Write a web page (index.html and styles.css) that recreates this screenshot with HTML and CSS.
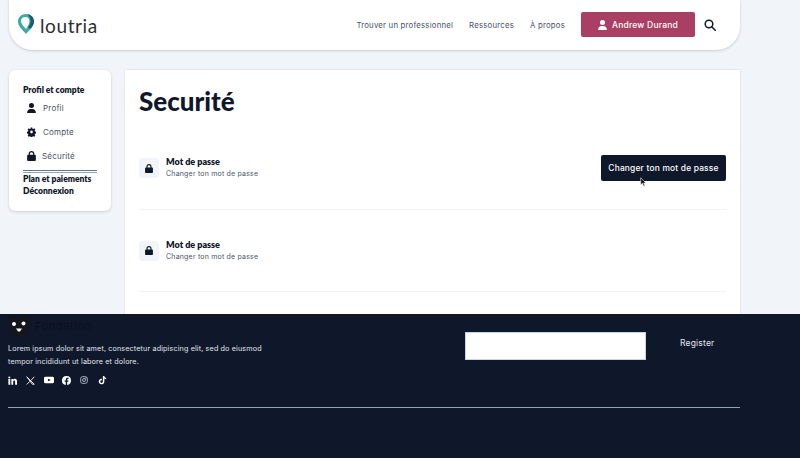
FILE: index.html
```html
<!DOCTYPE html>
<html lang="fr">
<head>
<meta charset="utf-8">
<title>Loutria</title>
<link rel="stylesheet" href="styles.css">
</head>
<body>
<header class="header">
  <a class="logo">
    <svg class="pin" viewBox="0 0 16 20" width="16" height="20"><path d="M8 20C4 15.500 0 12 0 7.500 0 3.200 3.400 0 8 0c4.600 0 8 3.200 8 7.500C16 12 12 15.500 8 20z" fill="#3fa9a8"/><path d="M8 15C5.500 12 3 9.800 3 7 3 4.500 5 3 7.500 3 10 3 11.500 5 11.500 7 11.500 9.800 10 12.300 8 15z" fill="#fff"/><path d="M9.500.2C13 .7 16 3.400 16 7.500c0 2.500-1.500 5-3.500 7.300L10 13.400C11.800 11 12.500 9 12.500 7c0-3-1.300-5-3-6.800z" fill="#1f5a6e"/></svg>
    <span class="logo-text">loutria</span>
  </a>
  <nav class="nav">
    <a class="nav-link">Trouver un professionnel</a>
    <a class="nav-link">Ressources</a>
    <a class="nav-link">À propos</a>
    <a class="user-btn">
      <svg viewBox="0 0 448 512" width="9" height="10" fill="#fff"><path d="M224 256a128 128 0 1 0 0-256 128 128 0 1 0 0 256zm-45.700 48C79.800 304 0 383.800 0 482.300 0 498.700 13.300 512 29.700 512h388.600c16.400 0 29.700-13.300 29.700-29.700C448 383.800 368.200 304 269.700 304h-91.400z"/></svg>
      Andrew Durand
    </a>
    <svg class="search" viewBox="0 0 24 24" width="12" height="12" fill="none" stroke="#0f172a" stroke-width="3" stroke-linecap="round"><circle cx="10" cy="10" r="7.600"/><path d="M16 16l6.500 6.500"/></svg>
  </nav>
</header>

<div class="content">
  <aside class="side">
    <h3 class="side-title">Profil et compte</h3>
    <a class="side-item">
      <svg viewBox="0 0 448 512" width="9" height="10" fill="#0f172a"><path d="M224 256a128 128 0 1 0 0-256 128 128 0 1 0 0 256zm-45.700 48C79.800 304 0 383.800 0 482.300 0 498.700 13.300 512 29.700 512h388.600c16.400 0 29.700-13.300 29.700-29.700C448 383.800 368.200 304 269.700 304h-91.400z"/></svg>
      <span>Profil</span>
    </a>
    <a class="side-item">
      <svg viewBox="0 0 24 24" width="9" height="10" fill="#0f172a" preserveAspectRatio="none"><path fill-rule="evenodd" d="M10 1h4l.6 3 2.200.9 2.600-1.700 2.800 2.800-1.700 2.600.9 2.200 3 .6v4l-3 .6-.9 2.200 1.700 2.600-2.800 2.800-2.600-1.700-2.200.9-.6 3h-4l-.6-3-2.200-.9-2.600 1.700-2.800-2.800 1.700-2.600-.9-2.200-3-.6v-4l3-.6.9-2.200-1.700-2.600 2.800-2.800 2.600 1.700 2.200-.9zM12 8.500a3.500 3.500 0 1 0 0 7 3.500 3.500 0 0 0 0-7z"/></svg>
      <span>Compte</span>
    </a>
    <a class="side-item side-item-sec">
      <svg viewBox="0 0 448 512" width="9" height="10" fill="#0f172a"><path d="M144 144v48h160v-48a80 80 0 0 0-160 0zm-64 48v-48a144 144 0 0 1 288 0v48h16c35.300 0 64 28.700 64 64v192c0 35.300-28.700 64-64 64H64c-35.300 0-64-28.700-64-64V256c0-35.300 28.700-64 64-64h16z"/></svg>
      <span>Sécurité</span>
    </a>
    <div class="side-rule"></div>
    <a class="side-strong">Plan et paiements</a>
    <a class="side-strong">Déconnexion</a>
  </aside>

  <main class="main">
    <h1 class="title">Securité</h1>
    <section class="row row-first">
      <div class="row-left">
        <span class="lock">
          <svg viewBox="0 0 448 512" width="8" height="9" fill="#0f172a"><path d="M144 144v48h160v-48a80 80 0 0 0-160 0zm-64 48v-48a144 144 0 0 1 288 0v48h16c35.300 0 64 28.700 64 64v192c0 35.300-28.700 64-64 64H64c-35.300 0-64-28.700-64-64V256c0-35.300 28.700-64 64-64h16z"/></svg>
        </span>
        <div>
          <div class="row-title">Mot de passe</div>
          <div class="row-sub">Changer ton mot de passe</div>
        </div>
      </div>
      <a class="dark-btn">Changer ton mot de passe</a>
    </section>
    <section class="row">
      <div class="row-left">
        <span class="lock">
          <svg viewBox="0 0 448 512" width="8" height="9" fill="#0f172a"><path d="M144 144v48h160v-48a80 80 0 0 0-160 0zm-64 48v-48a144 144 0 0 1 288 0v48h16c35.300 0 64 28.700 64 64v192c0 35.300-28.700 64-64 64H64c-35.300 0-64-28.700-64-64V256c0-35.300 28.700-64 64-64h16z"/></svg>
        </span>
        <div>
          <div class="row-title">Mot de passe</div>
          <div class="row-sub">Changer ton mot de passe</div>
        </div>
      </div>
    </section>
  </main>
</div>

<footer class="footer">
  <div class="foot-top">
    <div class="foot-left">
      <div class="foot-logo">
        <span class="foot-mark">
          <svg viewBox="0 0 20 20" width="20" height="20"><rect width="20" height="20" rx="2" fill="#14161c"/><circle cx="5" cy="8" r="2" fill="#fff"/><circle cx="14.500" cy="7.500" r="2" fill="#fff"/><path d="M7 12.500h6l-2 3h-2z" fill="#fff"/></svg>
        </span>
        <span class="foot-name">Fondation</span>
      </div>
      <p class="foot-text">Lorem ipsum dolor sit amet, consectetur adipiscing elit, sed do eiusmod tempor incididunt ut labore et dolore.</p>
      <div class="socials">
        <svg viewBox="0 0 24 24" width="9" height="9" fill="#fff"><path d="M1 8h5v15H1zM3.500 1a2.700 2.700 0 1 1 0 5.400 2.700 2.700 0 0 1 0-5.400zM9 8h4.700v2.100c.9-1.500 2.500-2.500 4.700-2.500 4 0 5.600 2.500 5.600 6.900V23h-5v-7.600c0-2-.5-3.400-2.300-3.400-2 0-2.900 1.500-2.900 3.500V23H9z"/></svg>
        <svg viewBox="0 0 24 24" width="9" height="9" fill="none" stroke="#fff" stroke-width="2.400"><path d="M2 2l20 20h-5L2 2z"/><path d="M22 2L13 12M10.500 14L2 22.500"/></svg>
        <svg viewBox="0 0 24 24" width="10" height="8" fill="#fff" preserveAspectRatio="none"><path fill-rule="evenodd" d="M4 2h16a4 4 0 0 1 4 4v12a4 4 0 0 1-4 4H4a4 4 0 0 1-4-4V6a4 4 0 0 1 4-4zm5.500 6v8l7-4z"/></svg>
        <svg viewBox="0 0 24 24" width="9" height="9" fill="#fff"><path d="M24 12a12 12 0 1 0-13.900 11.900v-8.400H7V12h3.100V9.400c0-3 1.800-4.700 4.500-4.700 1.300 0 2.700.2 2.700.2v3h-1.500c-1.500 0-2 .9-2 1.900V12h3.400l-.5 3.500h-2.900v8.400A12 12 0 0 0 24 12z"/></svg>
        <svg viewBox="0 0 24 24" width="8" height="8" fill="none" stroke="#cbd5e1" stroke-width="2.400"><rect x="2" y="2" width="20" height="20" rx="6"/><circle cx="12" cy="12" r="4.500"/><circle cx="17.800" cy="6.200" r=".8" fill="#cbd5e1"/></svg>
        <svg viewBox="0 0 24 24" width="9" height="10" fill="#fff"><path d="M13 1h3.800c.3 2.900 2 4.700 4.900 4.900v3.900c-1.800 0-3.400-.6-4.800-1.600v7.700c0 5-3.900 7.700-7.500 7.700-4.300 0-7.400-3.300-7.400-7.400 0-4.500 3.800-7.900 8.700-7.300v4c-2.400-.6-4.700.8-4.700 3.300 0 2 1.500 3.500 3.400 3.500 2.100 0 3.600-1.500 3.600-3.900z"/></svg>
      </div>
    </div>
    <form class="foot-form">
      <div class="foot-input"></div>
      <span class="foot-reg">Register</span>
    </form>
  </div>
  <div class="foot-rule"></div>
</footer>

<svg class="cursor" viewBox="0 0 10 14" width="7" height="10"><path d="M1 1v10l2.500-2.200L5.200 13l1.800-.8L5.300 8.300H8.500z" fill="#111" stroke="#fff" stroke-width=".8"/></svg>
</body>
</html>
```
FILE: styles.css
```css
* { box-sizing: border-box; }
html, body { margin: 0; padding: 0; }
body {
  position: relative;
  width: 800px;
  height: 458px;
  overflow: hidden;
  background: #f1f5f9;
  font-family: "Inter", "Liberation Sans", sans-serif;
  color: #0f172a;
}
h1, h3, p { margin: 0; }

.header {
  margin-left: 9px;
  width: 731px;
  height: 50px;
  background: #fff;
  border-radius: 0 0 24px 24px;
  box-shadow: 0 1px 3px rgba(15, 23, 42, .18);
  display: flex;
  align-items: center;
  justify-content: space-between;
  padding: 0 24px 1px 9px;
}
.logo { display: flex; align-items: center; gap: 6px; }
.pin { display: block; margin-top: -2px; }
.logo-text {
  font-family: "Lato", sans-serif;
  font-size: 19px;
  letter-spacing: .6px;
  color: #2b2f36;
  font-weight: 400;
  margin-top: 1px;
}
.nav { display: flex; align-items: center; }
.nav-link {
  font-size: 7.800px;
  letter-spacing: .2px;
  color: #475569;
  margin-right: 16px;
  white-space: nowrap;
}
.user-btn {
  width: 114px;
  height: 25px;
  background: #a94064;
  border-radius: 2px;
  color: #fff;
  font-size: 8.500px;
  font-weight: 500;
  letter-spacing: .2px;
  display: flex;
  align-items: center;
  justify-content: center;
  gap: 5px;
  margin-right: 9px;
  white-space: nowrap;
}
.search { display: block; }

.content { display: flex; align-items: flex-start; gap: 14px; margin: 20px 0 0 9px; height: 244px; }
.side {
  width: 102px;
  height: 141px;
  background: #fff;
  border-radius: 6px;
  box-shadow: 0 1px 3px rgba(15, 23, 42, .18);
  padding: 14px 14px 0;
}
.side-title, .side-strong, .row-title {
  font-family: "Lato", sans-serif;
  font-weight: 800;
  white-space: nowrap;
}
.side-title { font-size: 8.500px; line-height: 12px; color: #0f172a; }
.side-item {
  display: flex;
  align-items: center;
  gap: 7px;
  height: 24px;
  padding-left: 4px;
  font-size: 8px;
  color: #475569;
  letter-spacing: .2px;
}
.side-item svg { flex: none; }
.side-item-sec { gap: 6px; }
.side-rule {
  border-top: 1px solid #64748b;
  border-bottom: 1px solid #94a3b8;
  height: 3px;
  margin: 2px 0 0;
}
.side-strong { display: block; font-size: 8.500px; line-height: 12px; color: #0f172a; }

.main {
  width: 615px;
  height: 244px;
  background: #fff;
  box-shadow: 0 0 2px rgba(15, 23, 42, .15);
  padding: 0 14px;
}
.title {
  font-family: "Lato", sans-serif;
  font-weight: 900;
  font-size: 26px;
  line-height: 32px;
  padding-top: 15px;
  height: 48px;
  color: #0f172a;
}
.row {
  display: flex;
  align-items: center;
  justify-content: space-between;
  height: 82px;
  border-bottom: 1px solid #f1f5f9;
}
.row-first { margin-top: 9px; height: 83px; }
.row-left { display: flex; align-items: center; gap: 7px; }
.lock {
  width: 20px;
  height: 20px;
  background: #f1f5f9;
  border-radius: 4px;
  display: flex;
  align-items: center;
  justify-content: center;
}
.row-title { font-size: 9px; line-height: 12px; }
.row-sub { font-size: 7px; letter-spacing: .2px; line-height: 12px; color: #475569; white-space: nowrap; }
.dark-btn {
  width: 125px;
  height: 26px;
  background: #0f172a;
  border-radius: 2px;
  color: #fff;
  font-size: 8.400px;
  font-weight: 500;
  letter-spacing: .2px;
  display: flex;
  align-items: center;
  justify-content: center;
  white-space: nowrap;
}

.footer {
  height: 144px;
  background: #0f172a;
  padding: 0 60px 0 8px;
}
.foot-top { display: flex; height: 93px; }
.foot-left { width: 457px; }
.foot-logo { display: flex; align-items: center; gap: 6px; height: 22px; padding-top: 2px; }
.foot-mark { display: block; height: 20px; margin-left: 1px; }
.foot-name { font-size: 11px; color: #0a1020; letter-spacing: .6px; }
.foot-text {
  width: 270px;
  margin-top: 7px;
  font-size: 7.200px;
  letter-spacing: .14px;
  line-height: 12.500px;
  color: #e2e8f0;
}
.socials {
  display: grid;
  grid-template-columns: repeat(6, 18px);
  align-items: center;
  margin-top: 7px;
}
.foot-form { display: flex; align-items: flex-start; padding-top: 18px; }
.foot-input { width: 181px; height: 28px; background: #fff; border: 1px solid #cbd5e1; }
.foot-reg { margin-left: 34px; line-height: 23px; font-size: 8.500px; color: #e2e8f0; letter-spacing: .2px; }
.foot-rule { border-top: 1px solid #94a3b8; width: 732px; }

.cursor { position: absolute; left: 640px; top: 177px; }
```
